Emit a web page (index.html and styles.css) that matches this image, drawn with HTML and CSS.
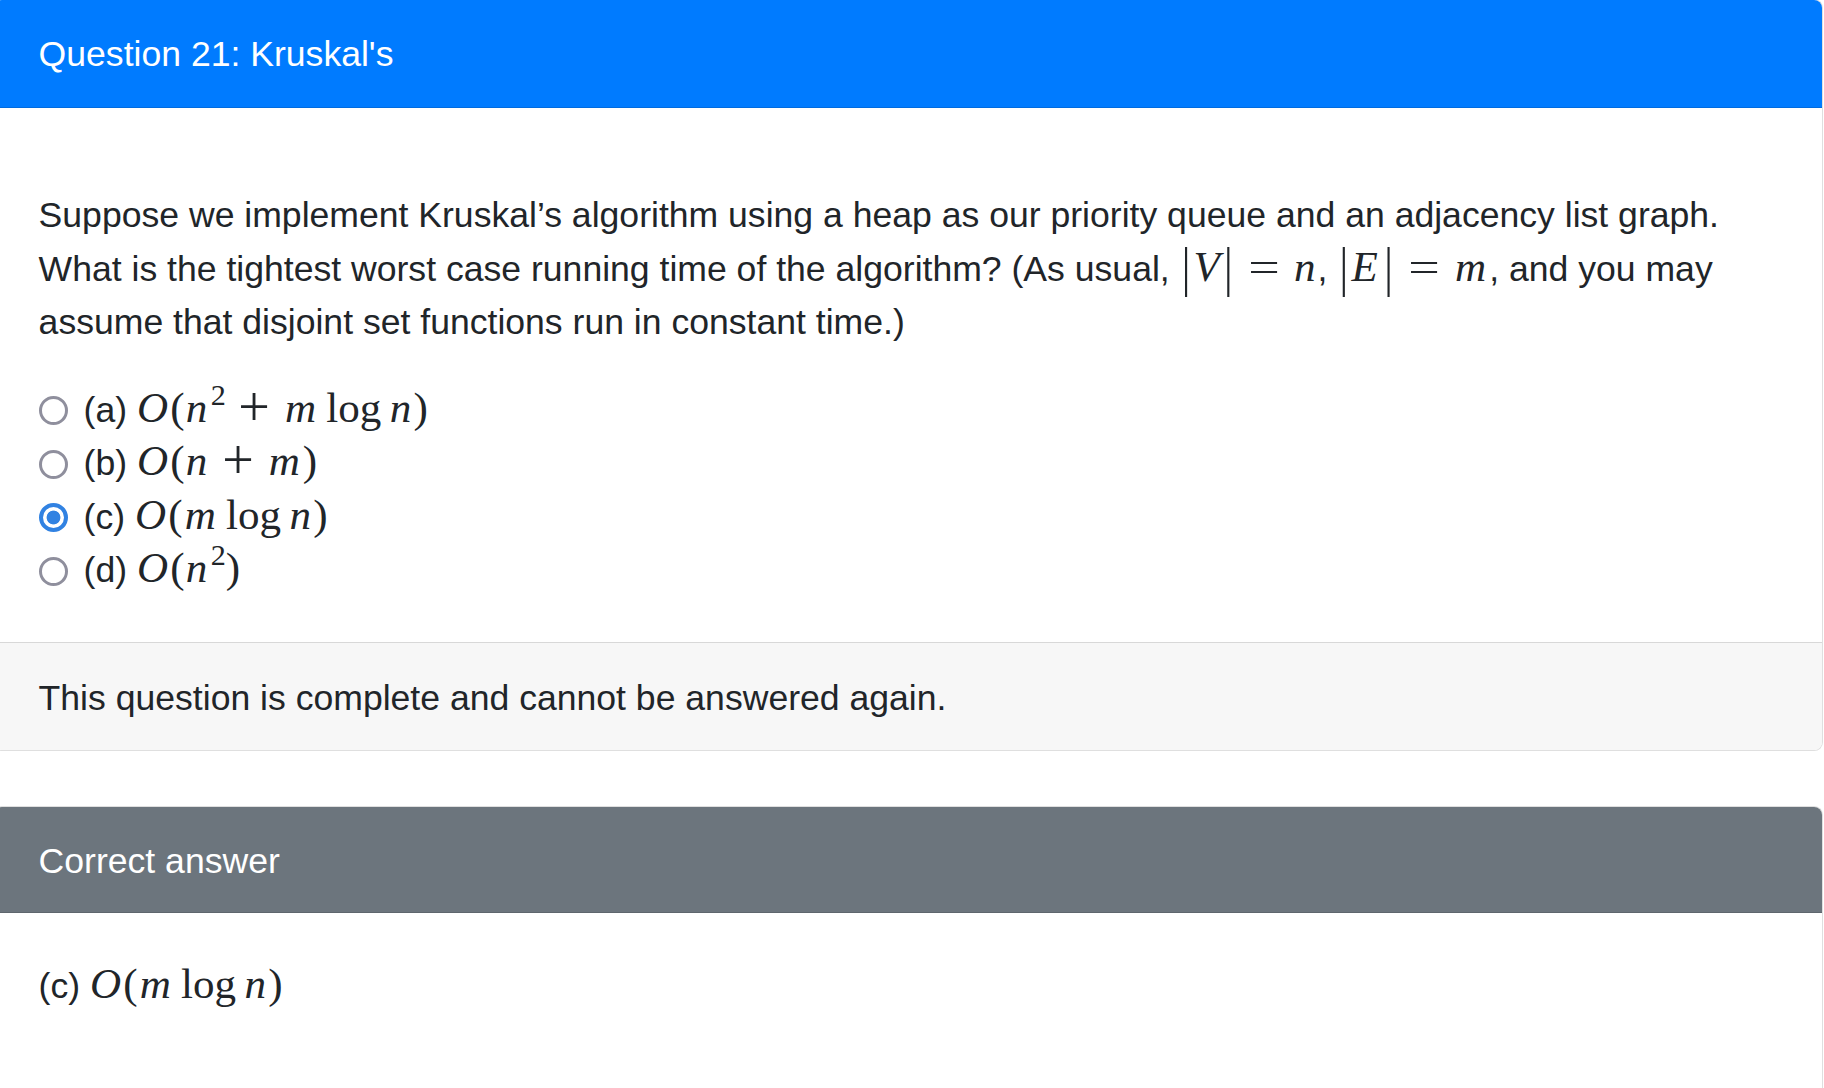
FILE: index.html
```html
<!DOCTYPE html>
<html lang="en">
<head>
<meta charset="utf-8">
<title>Question 21: Kruskal's</title>
<link rel="stylesheet" href="styles.css">
</head>
<body>
<div class="page">
  <div class="card question">
    <div class="card-header header-primary">Question 21: Kruskal's</div>
    <div class="card-body question-body">
      <p class="question-text">Suppose we implement Kruskal’s algorithm using a heap as our priority queue and an adjacency list graph. What is the tightest worst case running time of the algorithm? (As usual, <span class="math"><span class="bar">|</span><i class="v">V</i><span class="bar">|</span><span class="rel">=</span><i class="n">n</i></span>, <span class="math"><span class="bar">|</span><i class="e">E</i><span class="bar">|</span><span class="rel">=</span><i class="m">m</i></span>, and you may assume that disjoint set functions run in constant time.)</p>
      <div class="options">
        <label class="opt"><span class="radio"></span><span class="opt-label">(a) <span class="math"><i class="o">O</i>(<i class="n">n</i><sup>2</sup><span class="bin">+</span><i class="m">m</i><span class="op">log</span><i class="n">n</i>)</span></span></label>
        <label class="opt"><span class="radio"></span><span class="opt-label">(b) <span class="math"><i class="o">O</i>(<i class="n">n</i><span class="bin">+</span><i class="m">m</i>)</span></span></label>
        <label class="opt"><span class="radio checked"></span><span class="opt-label">(c) <span class="math"><i class="o">O</i>(<i class="m">m</i><span class="op">log</span><i class="n">n</i>)</span></span></label>
        <label class="opt"><span class="radio"></span><span class="opt-label">(d) <span class="math"><i class="o">O</i>(<i class="n">n</i><sup>2</sup>)</span></span></label>
      </div>
    </div>
    <div class="card-footer">This question is complete and cannot be answered again.</div>
  </div>

  <div class="card answer">
    <div class="card-header header-secondary">Correct answer</div>
    <div class="card-body answer-body">
      <div class="answer-line">(c) <span class="math"><i class="o">O</i>(<i class="m">m</i><span class="op">log</span><i class="n">n</i>)</span></div>
    </div>
  </div>
</div>
</body>
</html>
```

FILE: styles.css
```css
* {
  box-sizing: border-box;
}

html,
body {
  margin: 0;
  padding: 0;
  overflow: hidden;
  background: #ffffff;
}

body {
  font-family: "Liberation Sans", Arial, sans-serif;
  font-size: 35.6px;
  line-height: 1.5;
  color: #212529;
}

.page {
  display: flex;
  flex-direction: column;
}

.card {
  margin: 0 1px 0 -7px;
  border: 1px solid rgba(0, 0, 0, 0.125);
  border-radius: 8.9px;
  overflow: hidden;
  background: #ffffff;
}

.question {
  margin-top: -1px;
}

.answer {
  margin-top: 55px;
  flex: none;
}

.card-header {
  padding: 26.7px 44.6px;
  line-height: 53.5px;
  color: #ffffff;
  border-bottom: 1px solid rgba(0, 0, 0, 0.125);
}

.header-primary {
  background: #007bff;
  padding-top: 28.2px;
  padding-bottom: 25.2px;
}

.header-secondary {
  background: #6c757d;
  padding-top: 28.2px;
  padding-bottom: 24.2px;
}

.card-body {
  padding: 44.6px;
}

.question-body {
  padding-bottom: 43.6px;
}

.question-text {
  margin: 36.8px 0 34.5px;
}

.options {
  display: flex;
  flex-direction: column;
}

.opt {
  display: flex;
  align-items: center;
  height: 53.5px;
}

.radio {
  flex: none;
  width: 29px;
  height: 29px;
  margin-left: 0;
  margin-right: 16px;
  border: 3.5px solid #8f8f9d;
  border-radius: 50%;
  background: #ffffff;
}

.radio.checked {
  border: 4px solid #3182e2;
  background: radial-gradient(circle, #3182e2 0 6.5px, #ffffff 7.3px);
}

.opt-label {
  white-space: nowrap;
}

.math {
  font-family: "Liberation Serif", "Times New Roman", serif;
  font-size: 1.21em;
  line-height: 1;
  white-space: nowrap;
}

.math i {
  font-style: italic;
}

.math i.o {
  padding-right: 0.05em;
}

.math i.n {
  padding: 0 0.05em 0 0.03em;
}

.math i.m {
  padding: 0 0.07em 0 0.05em;
}

.math i.e {
  padding: 0 0.1em 0 0.03em;
}

.math i.v {
  padding: 0 0.05em 0 0.02em;
}

.math sup {
  font-size: 0.7em;
  line-height: 0;
  vertical-align: 0.58em;
  padding-left: 0.04em;
}

.bar {
  display: inline-block;
  transform: scaleY(1.28);
  padding: 0 0.05em;
}

.bin {
  display: inline-block;
  margin: 0 0.38em;
  transform: scale(1.3);
}

.rel {
  margin: 0 0.39em;
  display: inline-block;
  transform: scaleX(1.3);
}

.op {
  margin: 0 0.1667em;
}

.card-footer {
  padding: 29.5px 44.6px 24px;
  line-height: 53.5px;
  background: #f7f7f7;
  border-top: 1px solid rgba(0, 0, 0, 0.125);
}

.answer-body {
  padding: 46.9px 44.6px 240px;
}

.answer-line {
  line-height: 53.5px;
}
```
